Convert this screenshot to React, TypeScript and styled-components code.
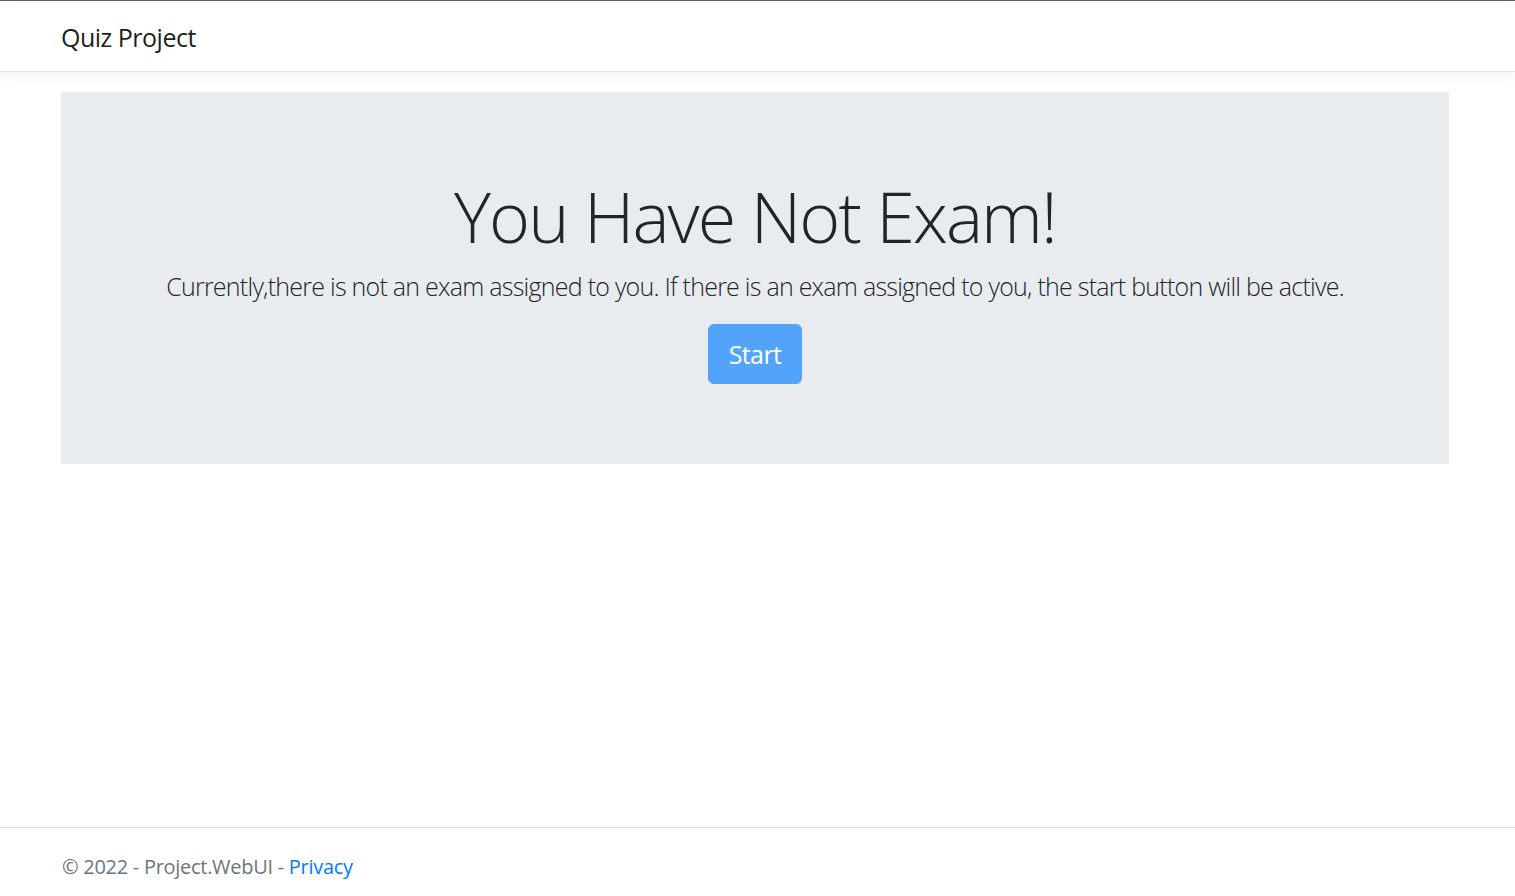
import React from "react";
import styled, { createGlobalStyle } from "styled-components";

const Global = createGlobalStyle`
  html, body { margin: 0; padding: 0; background: #fff; }
  body {
    font-family: "Open Sans", "Noto Sans", "Liberation Sans", sans-serif;
    color: #212529;
    font-size: 20px;
    line-height: 1.5;
  }
  * { box-sizing: border-box; }
`;

const Page = styled.div`
  min-height: 100vh;
  display: flex;
  flex-direction: column;
  border-top: 1px solid #5f6368;
`;

const Navbar = styled.header`
  height: 71px;
  display: flex;
  align-items: center;
  padding: 3px 0 0 61px;
  background: #fff;
  border-bottom: 1px solid #dee2e6;
  box-shadow: 0 5px 15px rgba(0, 0, 0, 0.05);
  position: relative;
  z-index: 1;
`;

const Brand = styled.a`
  font-size: 25px;
  line-height: 37.5px;
  letter-spacing: -0.5px;
  color: rgba(0, 0, 0, 0.9);
  text-decoration: none;
  font-weight: 400;
`;

const Main = styled.main`
  padding: 20px 66px 0 61px;
  flex: 1;
`;

const Jumbotron = styled.section`
  background: #e9ecef;
  padding: 82px 40px 80px;
  display: flex;
  flex-direction: column;
  align-items: center;
  text-align: center;
`;

const Title = styled.h1`
  margin: 0 0 10px;
  font-size: 70px;
  line-height: 84px;
  font-weight: 300;
  letter-spacing: -1.9px;
  color: #212529;
`;

const Lead = styled.p`
  margin: 0 0 18px;
  font-size: 25px;
  line-height: 37.5px;
  font-weight: 300;
  letter-spacing: -0.75px;
  color: #212529;
`;

const Button = styled.button`
  font-family: inherit;
  font-size: 25px;
  line-height: 38px;
  letter-spacing: -0.6px;
  padding: 10px 20px;
  border: 1px solid #52a3f9;
  border-radius: 6px;
  background: #52a3f9;
  color: #fff;
  cursor: default;
`;

const Footer = styled.footer`
  height: 69px;
  border-top: 1px solid #dee2e6;
  padding: 1px 0 0 62px;
  line-height: 75px;
  font-size: 20px;
  letter-spacing: -0.28px;
  color: #6c757d;
  white-space: nowrap;
`;

const Link = styled.a`
  color: #007bff;
  text-decoration: none;
`;

export default function App() {
  return (
    <>
      <Global />
      <Page>
        <Navbar>
          <Brand href="#">Quiz Project</Brand>
        </Navbar>
        <Main>
          <Jumbotron>
            <Title>You Have Not Exam!</Title>
            <Lead>
              Currently,there is not an exam assigned to you. If there is an exam assigned to you, the start button will be active.
            </Lead>
            <Button disabled>Start</Button>
          </Jumbotron>
        </Main>
        <Footer>
          © 2022 - Project.WebUI - <Link href="#">Privacy</Link>
        </Footer>
      </Page>
    </>
  );
}
